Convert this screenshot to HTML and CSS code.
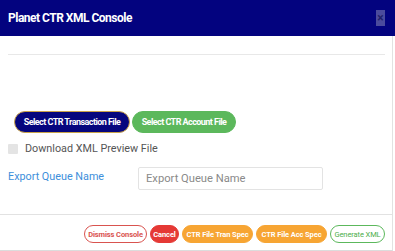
FILE: index.html
```html
<!DOCTYPE html>
<html>
<head>
<meta charset="utf-8">
<link rel="stylesheet" href="styles.css">
</head>
<body>
<div class="modal">
  <div class="header">
    <span class="title">Planet CTR XML Console</span>
    <span class="close">×</span>
  </div>
  <div class="body">
    <div class="divider"></div>
    <div class="select-row">
      <button class="btn btn-navy">Select CTR Transaction File</button>
      <button class="btn btn-green">Select CTR Account File</button>
    </div>
    <label class="check-row"><span class="checkbox"></span><span>Download XML Preview File</span></label>
    <div class="export-row">
      <span class="export-label">Export Queue Name</span>
      <input class="export-input" type="text" placeholder="Export Queue Name">
    </div>
  </div>
  <div class="footer">
    <button class="fbtn f-outline-red">Dismiss Console</button>
    <button class="fbtn f-red">Cancel</button>
    <button class="fbtn f-orange">CTR File Tran Spec</button>
    <button class="fbtn f-orange">CTR File Acc Spec</button>
    <button class="fbtn f-outline-green">Generate XML</button>
  </div>
</div>
</body>
</html>
```

FILE: styles.css
```css
html, body {
  margin: 0;
  padding: 0;
  background: #ffffff;
  font-family: Roboto, "Liberation Sans", sans-serif;
}
.modal {
  width: 392px;
  height: 250px;
  border-right: 1px solid #e2e2e2;
  border-bottom: 1px solid #dcdcdc;
  display: flex;
  flex-direction: column;
}
.header {
  height: 36px;
  width: 395px;
  background: #03037f;
  display: flex;
  align-items: center;
  justify-content: space-between;
  padding: 0 10px 0 8px;
  box-sizing: border-box;
}
.title {
  color: #ffffff;
  font-weight: 700;
  font-size: 12px;
  letter-spacing: -0.5px;
}
.close {
  width: 9px;
  height: 16px;
  background: #4b4b9d;
  color: #20206a;
  font-size: 12px;
  line-height: 16px;
  text-align: center;
  font-weight: 700;
}
.body {
  padding: 0 8px;
  flex: 1;
}
.divider {
  margin-top: 18px;
  height: 1px;
  width: 377px;
  background: #e8e8e8;
}
.select-row {
  margin-top: 56px;
  margin-left: 6px;
  display: flex;
  gap: 2px;
}
.btn {
  height: 22px;
  border-radius: 11px;
  font-family: Roboto, "Liberation Sans", sans-serif;
  font-weight: 700;
  font-size: 9px;
  letter-spacing: -0.55px;
  color: #ffffff;
  padding: 0;
  white-space: nowrap;
  text-align: center;
  cursor: pointer;
}
.btn-navy {
  background: #06067e;
  border: 1px solid #c9a24a;
  width: 116px;
}
.btn-green {
  background: #5cb85c;
  border: 1px solid #5cb85c;
  width: 104px;
}
.check-row {
  margin-top: 9px;
  display: flex;
  align-items: center;
  gap: 7px;
  font-size: 10.8px;
  color: #555555;
}
.checkbox {
  width: 10px;
  height: 10px;
  background: #e4e4e4;
  border-radius: 1px;
}
.export-row {
  margin-top: 12px;
  display: flex;
  align-items: center;
}
.export-label {
  color: #3d8fdb;
  font-size: 10.8px;
  width: 130px;
  margin-top: -5px;
}
.export-input {
  width: 185px;
  height: 23px;
  box-sizing: border-box;
  border: 1px solid #e3e3e3;
  border-radius: 2px;
  padding: 0 7px;
  font-family: Roboto, "Liberation Sans", sans-serif;
  font-size: 11.2px;
  color: #555;
  outline: none;
}
.export-input::placeholder {
  color: #8a8a8a;
}
.footer {
  border-top: 1px solid #e2e2e2;
  height: 36px;
  display: flex;
  justify-content: flex-end;
  align-items: flex-start;
  gap: 3px;
  padding: 10px 7px 0 0;
  box-sizing: border-box;
}
.fbtn {
  height: 18px;
  border-radius: 9px;
  font-family: Roboto, "Liberation Sans", sans-serif;
  font-size: 7.5px;
  font-weight: 700;
  padding: 0;
  white-space: nowrap;
  text-align: center;
  letter-spacing: -0.1px;
  cursor: pointer;
}
.f-outline-red {
  background: #ffffff;
  border: 1px solid #d9534f;
  color: #d9534f;
  width: 63px;
}
.f-red {
  background: #e53935;
  border: 1px solid #e53935;
  color: #ffffff;
  width: 29px;
}
.f-orange {
  background: #f7a533;
  border: 1px solid #f7a533;
  color: #ffffff;
  width: 71px;
}
.f-outline-green {
  background: #ffffff;
  border: 1px solid #5cb85c;
  color: #4cae4c;
  font-weight: 400;
  width: 55px;
}
```
